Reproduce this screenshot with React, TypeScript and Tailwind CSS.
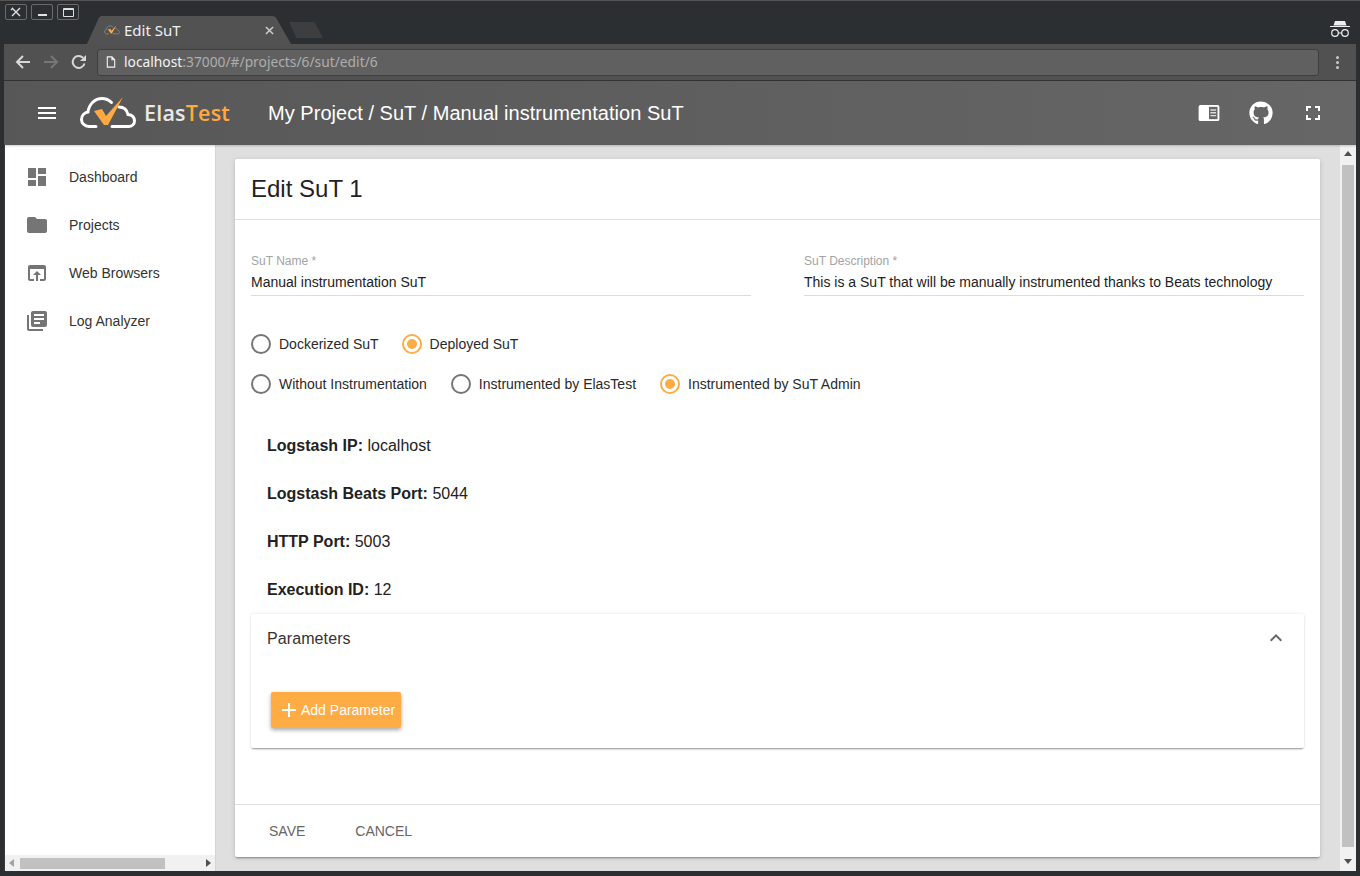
import React from "react";
import { FaGithub } from "react-icons/fa";

const sideItems = [
  {
    label: "Dashboard",
    path: "M3 13h8V3H3v10zm0 8h8v-6H3v6zm10 0h8V11h-8v10zm0-18v6h8V3h-8z",
  },
  {
    label: "Projects",
    path: "M10 4H4c-1.1 0-2 .9-2 2v12c0 1.1.9 2 2 2h16c1.1 0 2-.9 2-2V8c0-1.1-.9-2-2-2h-8l-2-2z",
  },
  {
    label: "Web Browsers",
    path: "M19 4H5c-1.11 0-2 .9-2 2v12c0 1.1.89 2 2 2h4v-2H5V8h14v10h-4v2h4c1.1 0 2-.9 2-2V6c0-1.1-.89-2-2-2zm-7 6l-4 4h3v6h2v-6h3l-4-4z",
  },
  {
    label: "Log Analyzer",
    path: "M4 6H2v14c0 1.1.9 2 2 2h14v-2H4V6zm16-4H8c-1.1 0-2 .9-2 2v12c0 1.1.9 2 2 2h12c1.1 0 2-.9 2-2V4c0-1.1-.9-2-2-2zm-1 9H9V9h10v2zm-4 4H9v-2h6v2zm4-8H9V5h10v2z",
  },
];

const infoRows = [
  { label: "Logstash IP:", value: "localhost" },
  { label: "Logstash Beats Port:", value: "5044" },
  { label: "HTTP Port:", value: "5003" },
  { label: "Execution ID:", value: "12" },
];

const CloudLogo = ({ className }: { className: string }) => (
  <svg viewBox="0 0 56 34" className={className} fill="none">
    <path
      d="M16 30.500H9C4.500 30.500 1.500 27 1.500 23.500c0-4 3-7 6.500-7.500C9 8 15 2.500 22 2.500c4 0 7 1.500 9.500 4M39 11c5 0 8 3 9 7.500 4 .5 6.500 3 6.500 6.500 0 3-2.500 5.500-6 5.500H32"
      stroke="currentColor"
      strokeWidth="3"
      strokeLinecap="round"
    />
    <path d="M14 15l8-2 4 7L43 1 28 29h-4z" fill="#ffa940" />
  </svg>
);

const Radio = ({ label, checked }: { label: string; checked?: boolean }) => (
  <div className="flex items-center gap-2">
    <span
      className={`flex h-5 w-5 items-center justify-center rounded-full border-2 ${
        checked ? "border-[#ffac44]" : "border-[#757575]"
      }`}
    >
      {checked && <span className="h-2.5 w-2.5 rounded-full bg-[#ffac44]" />}
    </span>
    <span className="text-sm text-[#2a2a2a]">{label}</span>
  </div>
);

const Field = ({ label, value, width }: { label: string; value: string; width: string }) => (
  <div className={`${width} border-b border-[#dcdcdc] pb-[5px]`}>
    <div className="text-xs leading-[14px] text-[#a3a3a3]">{label}</div>
    <div className="mt-[6px] text-sm leading-[16px] text-[#222]">{value}</div>
  </div>
);

const App = () => {
  return (
    <div className="flex h-[876px] w-[1360px] flex-col overflow-hidden border-t border-[#555] bg-[#2c2f31] pb-[5px] pl-[4px] pr-[4px] font-['Liberation_Sans',Arial,sans-serif]">
      {/* window title bar + tabs */}
      <div className="relative h-[43px] shrink-0">
        <div className="flex gap-1 pl-px pt-[3px]">
          <div className="flex h-[16px] w-[22px] items-center justify-center rounded-[2px] border border-[#6a6a6a] text-[#e0e0e0]">
            <svg viewBox="0 0 12 10" className="h-[10px] w-[12px]" stroke="currentColor" strokeWidth="1.4">
              <path d="M2 1l8 8M10 1L2 9M1 3l2-2" />
            </svg>
          </div>
          <div className="flex h-[16px] w-[22px] items-end justify-center rounded-[2px] border border-[#6a6a6a] pb-[3px]">
            <span className="h-[2px] w-[9px] bg-[#e0e0e0]" />
          </div>
          <div className="flex h-[16px] w-[22px] items-center justify-center rounded-[2px] border border-[#6a6a6a]">
            <span className="h-[9px] w-[11px] rounded-[1px] border border-t-2 border-[#e0e0e0]" />
          </div>
        </div>
        <div className="absolute left-[83px] top-[15px] flex h-[28px] w-[204px] items-center bg-[#525252] pl-[17px] pr-[17px] [clip-path:polygon(0_100%,12px_5%,14px_0,186px_0,189px_5%,100%_100%)]">
          <CloudLogo className="h-[12px] w-[16px] text-[#8a8a8a]" />
          <span className="ml-[4px] font-['Noto_Sans',sans-serif] text-[15px] text-[#f0f0f0]">Edit SuT</span>
          <svg viewBox="0 0 10 10" className="ml-auto h-[9px] w-[9px] text-[#d0d0d0]" stroke="currentColor" strokeWidth="1.6">
            <path d="M1 1l8 8M9 1L1 9" />
          </svg>
        </div>
        <div className="absolute left-[285px] top-[21px] h-[16px] w-[34px] bg-[#3c3e40] [clip-path:polygon(22%_100%,0_0,75%_0,100%_100%)]" />
        <svg viewBox="0 0 24 20" className="absolute right-[4px] top-[18px] h-[20px] w-[24px] text-[#eee]" fill="currentColor">
          <path d="M7 2h10l1.500 4.500H5.500zM2 7h20v1H2z" />
          <circle cx="7" cy="14" r="3.300" fill="none" stroke="currentColor" strokeWidth="1.200" />
          <circle cx="17" cy="14" r="3.300" fill="none" stroke="currentColor" strokeWidth="1.200" />
          <path d="M10 13.500h4v1h-4z" />
        </svg>
      </div>

      {/* browser toolbar */}
      <div className="flex h-[37px] shrink-0 items-center border-b border-[#333] bg-[#515151]">
        <div className="flex w-[93px] shrink-0 items-center gap-[12px] pl-[11px] text-[#d8d8d8]">
          <svg viewBox="0 0 16 16" className="h-4 w-4" fill="none" stroke="currentColor" strokeWidth="2">
            <path d="M15 8H2M8 2L2 8l6 6" />
          </svg>
          <svg viewBox="0 0 16 16" className="h-4 w-4 text-[#777]" fill="none" stroke="currentColor" strokeWidth="2">
            <path d="M1 8h13M8 2l6 6-6 6" />
          </svg>
          <svg viewBox="0 0 16 16" className="h-4 w-4" fill="none" stroke="currentColor" strokeWidth="2">
            <path d="M13.500 9.500A6 6 0 1 1 12 3.800" />
            <path d="M15 1v6H9z" fill="currentColor" stroke="none" />
          </svg>
        </div>
        <div className="flex h-[27px] w-[1222px] items-center rounded-[3px] border border-[#3f3f3f] bg-[#606060] pl-2">
          <svg viewBox="0 0 10 13" className="h-[12px] w-[10px] text-[#f2f2f2]" fill="none" stroke="currentColor" strokeWidth="1.200">
            <path d="M1 1h5l3 3v8H1zM6 1v3h3" />
          </svg>
          <span className="ml-[8px] font-['Noto_Sans',sans-serif] text-[13.800px] text-[#f4f4f4]">localhost</span>
          <span className="font-['Noto_Sans',sans-serif] text-[13.800px] text-[#aeaeae]">:37000/#/projects/6/sut/edit/6</span>
        </div>
        <div className="ml-[17px] flex flex-col gap-[2px]">
          <span className="h-[3px] w-[3px] rounded-full bg-[#c8c8c8]" />
          <span className="h-[3px] w-[3px] rounded-full bg-[#c8c8c8]" />
          <span className="h-[3px] w-[3px] rounded-full bg-[#c8c8c8]" />
        </div>
      </div>

      {/* app header */}
      <div className="relative z-10 flex h-[64px] shrink-0 items-center bg-gradient-to-r from-[#575757] to-[#666666] pl-[1px] text-white shadow-[0_1px_2px_rgba(0,0,0,0.2)]">
        <svg viewBox="0 0 24 24" className="ml-[30px] h-[24px] w-[24px]" fill="currentColor">
          <path d="M3 18h18v-2H3v2zm0-5h18v-2H3v2zm0-7v2h18V6H3z" />
        </svg>
        <CloudLogo className="ml-[21px] h-[34px] w-[56px] text-white" />
        <span className="ml-[8px] font-['Open_Sans',sans-serif] text-[21.500px] font-semibold leading-none tracking-[0.2px] text-[#e9e9e9]">
          Elas<span className="text-[#ffa940]">Test</span>
        </span>
        <span className="ml-[38px] text-xl tracking-[0.03px]">My Project / SuT / Manual instrumentation SuT</span>
        <div className="ml-auto flex items-center pr-[31px]">
          <svg viewBox="0 0 22 18" className="h-[17px] w-[22px]">
            <rect width="22" height="17" rx="2" fill="#fff" />
            <rect x="11" y="2" width="9" height="13" fill="#666" />
            <path d="M12.500 4.500h6v1.500h-6zM12.500 7.500h6V9h-6zM12.500 10.500h6V12h-6z" fill="#ddd" />
          </svg>
          <FaGithub className="ml-[29px] h-[24px] w-[24px]" />
          <svg viewBox="0 0 24 24" className="ml-[28px] h-[24px] w-[24px]" fill="currentColor">
            <path d="M7 14H5v5h5v-2H7v-3zm-2-4h2V7h3V5H5v5zm12 7h-3v2h5v-5h-2v3zM14 5v2h3v3h2V5h-5z" />
          </svg>
        </div>
      </div>

      {/* body */}
      <div className="flex min-h-0 flex-1 border-l border-[#3a3a3a] bg-[#dfdfdf]">
        <aside className="flex w-[211px] shrink-0 flex-col border-r border-[#d4d4d4] bg-white">
          <nav className="flex-1 pt-[8px]">
            {sideItems.map((item) => (
              <div key={item.label} className="flex h-[48px] items-center pl-[20px]">
                <svg viewBox="0 0 24 24" className="h-[24px] w-[24px]" fill="#757575">
                  <path d={item.path} />
                </svg>
                <span className="ml-[20px] text-sm text-[#333]">{item.label}</span>
              </div>
            ))}
          </nav>
          <div className="flex h-[16px] items-center bg-[#f1f1f1] px-[1px]">
            <span className="ml-[3px] h-0 w-0 border-y-[4px] border-r-[5px] border-y-transparent border-r-[#a3a3a3]" />
            <span className="ml-[6px] h-[11px] w-[145px] bg-[#c1c1c1]" />
            <span className="ml-auto mr-[3px] h-0 w-0 border-y-[4px] border-l-[5px] border-y-transparent border-l-[#505050]" />
          </div>
        </aside>

        <main className="flex min-w-0 flex-1">
          <div className="flex-1 pb-[14px] pl-[19px] pr-[20px] pt-[14px]">
            <div className="flex h-full flex-col rounded-[2px] bg-white shadow-[0_2px_2px_-1px_rgba(0,0,0,0.35),0_1px_5px_0_rgba(0,0,0,0.15)]">
              <div className="flex h-[61px] shrink-0 items-center border-b border-[#e0e0e0] px-4 text-2xl text-[#222]">
                Edit SuT 1
              </div>
              <div className="flex-1 px-4 pt-[34px]">
                <div className="flex gap-[53px]">
                  <Field label="SuT Name *" value="Manual instrumentation SuT" width="w-[500px]" />
                  <Field
                    label="SuT Description *"
                    value="This is a SuT that will be manually instrumented thanks to Beats technology"
                    width="w-[500px]"
                  />
                </div>
                <div className="mt-[38px] flex h-5 gap-[23px]">
                  <Radio label="Dockerized SuT" />
                  <Radio label="Deployed SuT" checked />
                </div>
                <div className="mt-5 flex h-5 gap-[24px]">
                  <Radio label="Without Instrumentation" />
                  <Radio label="Instrumented by ElasTest" />
                  <Radio label="Instrumented by SuT Admin" checked />
                </div>
                <div className="pl-4 pt-[28px]">
                  {infoRows.map((row) => (
                    <p key={row.label} className="h-[48px] text-base leading-[48px] text-[#222]">
                      <b className="font-bold">{row.label}</b> {row.value}
                    </p>
                  ))}
                </div>
                <div className="h-[134px] w-[1053px] rounded-[2px] bg-white shadow-[0_2px_2px_-1px_rgba(0,0,0,0.4),0_0_3px_0_rgba(0,0,0,0.12)]">
                  <div className="flex h-[48px] items-center justify-between pl-4 pr-[16px] text-base text-[#333]">
                    <span className="mt-[2px] tracking-[0.1px]">Parameters</span>
                    <svg viewBox="0 0 24 24" className="h-[24px] w-[24px]" fill="#666">
                      <path d="M12 8l-6 6 1.410 1.410L12 10.830l4.590 4.580L18 14z" />
                    </svg>
                  </div>
                  <div className="pl-5 pt-[30px]">
                    <button className="flex h-[36px] w-[130px] items-center rounded-[2px] bg-[#ffac44] pl-[6px] text-sm text-white shadow-[0_2px_4px_rgba(0,0,0,0.35)]">
                      <svg viewBox="0 0 24 24" className="h-[24px] w-[24px]" fill="currentColor">
                        <path d="M19 13h-6v6h-2v-6H5v-2h6V5h2v6h6v2z" />
                      </svg>
                      <span>Add Parameter</span>
                    </button>
                  </div>
                </div>
              </div>
              <div className="flex h-[53px] shrink-0 items-center gap-[50px] border-t border-[#e0e0e0] pl-[34px] text-sm text-[#666]">
                <span>SAVE</span>
                <span>CANCEL</span>
              </div>
            </div>
          </div>
          {/* page scrollbar */}
          <div className="flex w-[16px] shrink-0 flex-col items-center bg-[#f1f1f1]">
            <span className="mt-[6px] h-0 w-0 border-x-[4px] border-b-[5px] border-x-transparent border-b-[#505050]" />
            <span className="mt-[9px] w-[12px] flex-1 bg-[#c1c1c1]" />
            <span className="mb-[7px] mt-[12px] h-0 w-0 border-x-[4px] border-t-[5px] border-x-transparent border-t-[#505050]" />
          </div>
        </main>
      </div>
    </div>
  );
};

export default App;
